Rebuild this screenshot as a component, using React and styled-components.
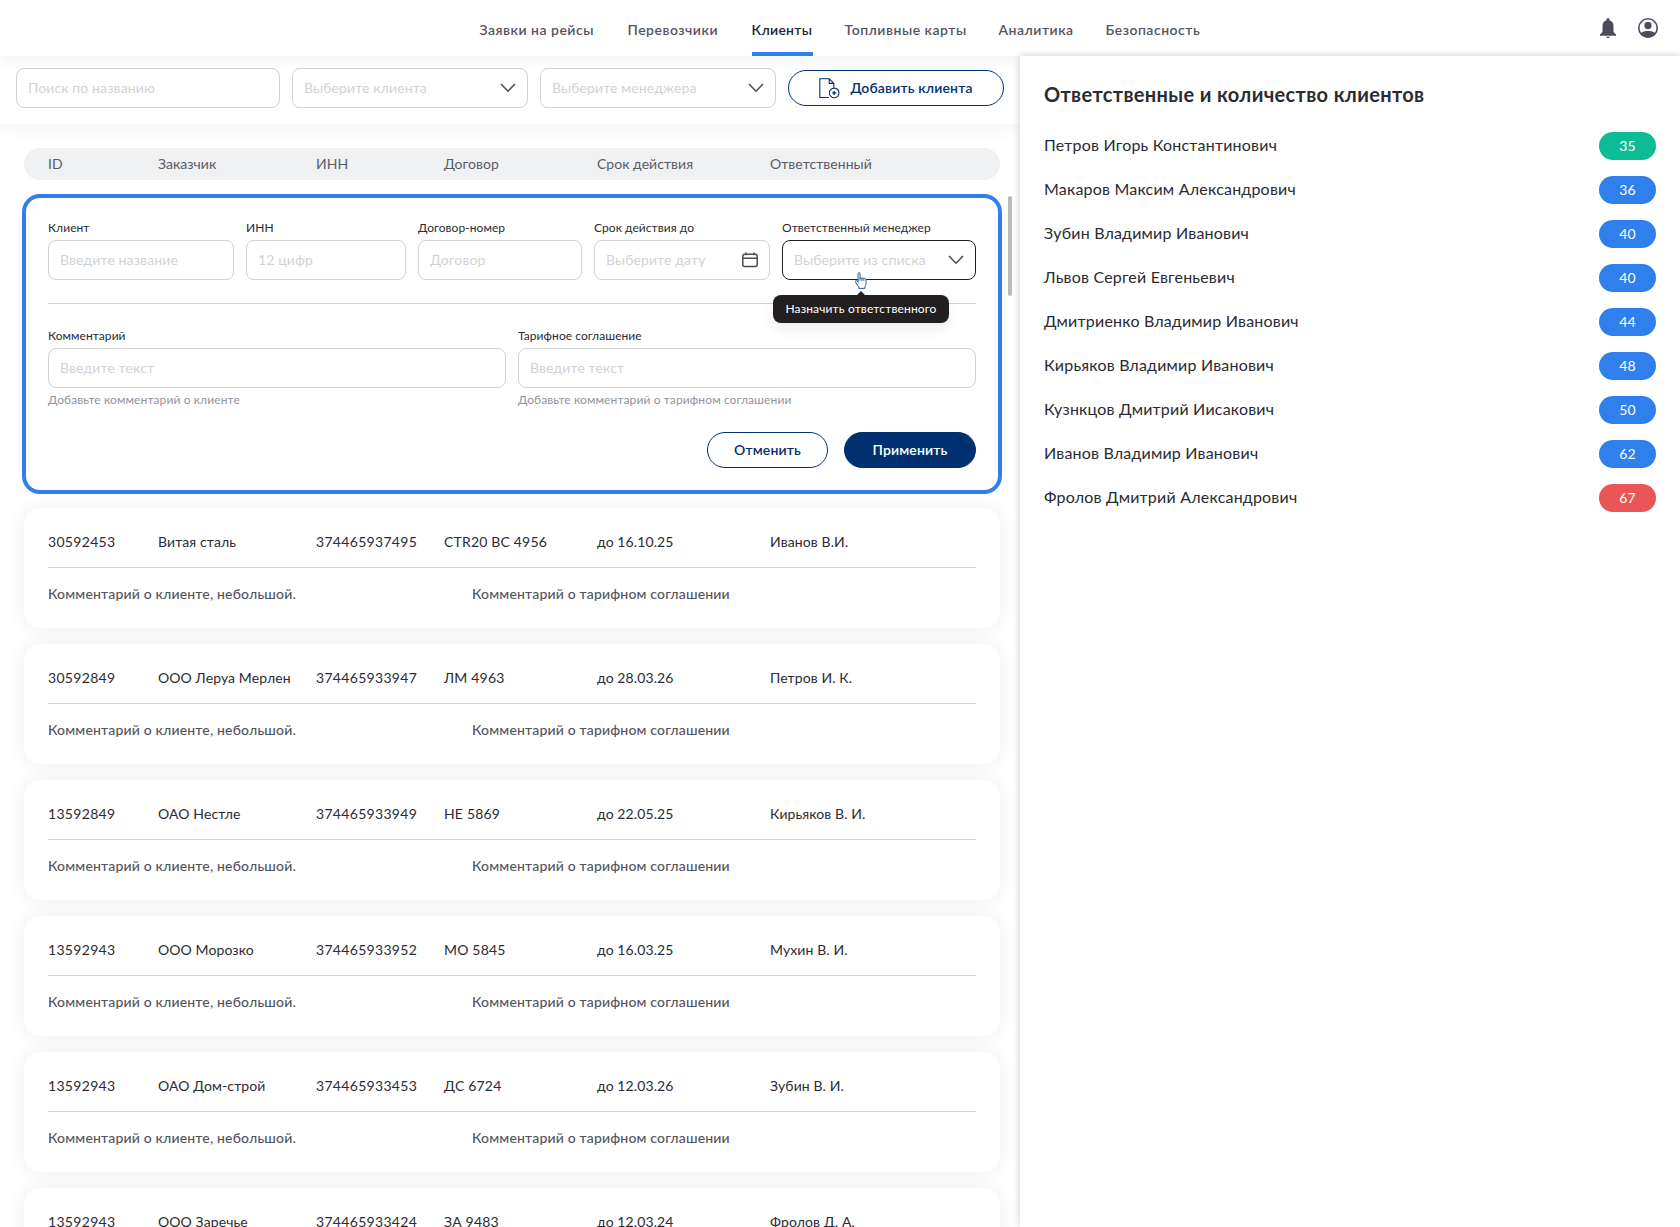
import React from "react";
import styled, { createGlobalStyle } from "styled-components";

const navItems = [
  { label: "Заявки на рейсы", width: 116 },
  { label: "Перевозчики", width: 92 },
  { label: "Клиенты", width: 61, active: true },
  { label: "Топливные карты", width: 122 },
  { label: "Аналитика", width: 75 },
  { label: "Безопасность", width: 96 },
];

const columns = ["ID", "Заказчик", "ИНН", "Договор", "Срок действия", "Ответственный"];

const clients = [
  ["30592453", "Витая сталь", "374465937495", "CTR20 ВС 4956", "до 16.10.25", "Иванов В.И."],
  ["30592849", "ООО Леруа Мерлен", "374465933947", "ЛМ 4963", "до 28.03.26", "Петров И. К."],
  ["13592849", "ОАО Нестле", "374465933949", "НЕ 5869", "до 22.05.25", "Кирьяков В. И."],
  ["13592943", "ООО Морозко", "374465933952", "МО 5845", "до 16.03.25", "Мухин В. И."],
  ["13592943", "ОАО Дом-строй", "374465933453", "ДС 6724", "до 12.03.26", "Зубин В. И."],
  ["13592943", "ООО Заречье", "374465933424", "ЗА 9483", "до 12.03.24", "Фролов Д. А."],
];

const managers = [
  { name: "Петров Игорь Константинович", count: 35, color: "#0dbc94" },
  { name: "Макаров Максим Александрович", count: 36 },
  { name: "Зубин Владимир Иванович", count: 40 },
  { name: "Львов Сергей Евгеньевич", count: 40 },
  { name: "Дмитриенко Владимир Иванович", count: 44 },
  { name: "Кирьяков Владимир Иванович", count: 48 },
  { name: "Кузнкцов Дмитрий Иисакович", count: 50 },
  { name: "Иванов Владимир Иванович", count: 62 },
  { name: "Фролов Дмитрий Александрович", count: 67, color: "#ea5657" },
];

const Chevron = () => (
  <svg width="16" height="10" viewBox="0 0 16 10" fill="none">
    <path d="M1 1 8 8.200 15 1" stroke="#4d4d59" strokeWidth="1.600" />
  </svg>
);

const CalendarIcon = () => (
  <svg width="16" height="16" viewBox="0 0 16 16" fill="none" stroke="#4d4d59" strokeWidth="1.5">
    <rect x="0.8" y="2.3" width="14.4" height="12.2" rx="2" />
    <path d="M1 6.2h14M4 0.4v2.8M12 0.4v2.8" />
  </svg>
);

const AddFileIcon = () => (
  <svg width="21" height="21" viewBox="0 0 21 21" fill="none" stroke="#003070" strokeWidth="1.1">
    <path d="M9.8 19.5H.8V.8h9.4l4.6 4.6v4.3M10.2.8v4.6h4.6" />
    <circle cx="15.2" cy="14.9" r="4.8" />
    <path d="M15.2 12.9v4M13.2 14.9h4" strokeWidth="1.3" />
  </svg>
);

const BellIcon = () => (
  <svg width="16" height="20" viewBox="0 0 16 20" fill="#4d4d59">
    <path d="M8 0a1.500 1.500 0 0 1 1.500 1.500v.8c2.400.7 4 2.800 4 5.500v6.100L16 16.500v1.300H0v-1.300l2.500-2.600V7.800c0-2.700 1.600-4.800 4-5.500v-.8A1.500 1.500 0 0 1 8 0zM6 18.700h4c-.3.8-1 1.300-2 1.300s-1.700-.5-2-1.300z" />
  </svg>
);

const UserIcon = () => (
  <svg width="20" height="20" viewBox="0 0 20 20">
    <circle cx="10" cy="10" r="9.200" fill="none" stroke="#4d4d59" strokeWidth="1.600" />
    <circle cx="10" cy="7.400" r="3.600" fill="#4d4d59" />
    <path d="M2.800 15.700c1.400-2.200 4-3 7.200-3s5.800.8 7.200 3A9.200 9.200 0 0 1 10 19.500a9.200 9.200 0 0 1-7.200-3.800z" fill="#4d4d59" />
  </svg>
);

const HandCursor = () => (
  <svg width="12" height="17" viewBox="0 0 12 17" fill="#fff" stroke="#1d4b84" strokeWidth="0.9">
    <path d="M3.100 10.300V1.700c0-1.500 1.900-1.500 1.900 0v5c0-1.300 1.900-1.300 1.900.1 0-1.200 1.900-1.200 1.900.2 0-1.100 2.200-1 2.200.7v3.900c0 1.500-.8 2.200-1.100 3.100v1.700H3.900v-1.500C2.600 13.700.7 11.300.6 9.400c-.1-1.300 1.300-1.400 1.700-.5z" />
    <path d="M5 6.700v2M6.900 6.800v2M8.800 7v1.800" />
  </svg>
);

function Field({ label, placeholder, hint, icon, focused, width, children }) {
  return (
    <FieldBox $width={width}>
      {label && <Label>{label}</Label>}
      <Input $focused={focused}>
        <span>{placeholder}</span>
        {icon}
      </Input>
      {hint && <Hint>{hint}</Hint>}
      {children}
    </FieldBox>
  );
}

function App() {
  return (
    <Page>
      <GlobalStyle />
      <Header>
        <Nav>
          {navItems.map((item) => (
            <NavItem key={item.label} $active={item.active} $width={item.width}>
              {item.label}
            </NavItem>
          ))}
        </Nav>
        <HeaderIcons>
          <BellIcon />
          <UserIcon />
        </HeaderIcons>
      </Header>
      <Main>
        <Content>
          <Filters>
            <Field placeholder="Поиск по названию" width={264} />
            <Field placeholder="Выберите клиента" width={236} icon={<Chevron />} />
            <Field placeholder="Выберите менеджера" width={236} icon={<Chevron />} />
            <Button $width={216}>
              <AddFileIcon />
              Добавить клиента
            </Button>
          </Filters>
          <ListArea>
            <List>
              <TableHead>
                {columns.map((name) => (
                  <span key={name}>{name}</span>
                ))}
              </TableHead>
              <EditCard>
                <FormRow>
                  <Field label="Клиент" placeholder="Введите название" width={186} />
                  <Field label="ИНН" placeholder="12 цифр" width={160} />
                  <Field label="Договор-номер" placeholder="Договор" width={164} />
                  <Field
                    label="Срок действия до"
                    placeholder="Выберите дату"
                    width={176}
                    icon={<CalendarIcon />}
                  />
                  <Field
                    label="Ответственный менеджер"
                    placeholder="Выберите из списка"
                    width={194}
                    icon={<Chevron />}
                    focused
                  >
                    <Pointer>
                      <HandCursor />
                    </Pointer>
                    <Tooltip>Назначить ответственного</Tooltip>
                  </Field>
                </FormRow>
                <FormDivider />
                <FormRow>
                  <Field
                    label="Комментарий"
                    placeholder="Введите текст"
                    hint="Добавьте комментарий о клиенте"
                    width={458}
                  />
                  <Field
                    label="Тарифное соглашение"
                    placeholder="Введите текст"
                    hint="Добавьте комментарий о тарифном соглашении"
                    width={458}
                  />
                </FormRow>
                <Actions>
                  <Button $width={121}>Отменить</Button>
                  <Button $width={132} $primary>
                    Применить
                  </Button>
                </Actions>
              </EditCard>
              <Cards>
                {clients.map((row, i) => (
                  <Card key={i}>
                    <CardTop>
                      {row.map((cell, j) => (
                        <span key={j}>{cell}</span>
                      ))}
                    </CardTop>
                    <CardBottom>
                      <span>Комментарий о клиенте, небольшой.</span>
                      <span>Комментарий о тарифном соглашении</span>
                    </CardBottom>
                  </Card>
                ))}
              </Cards>
            </List>
            <ScrollThumb />
          </ListArea>
        </Content>
        <Sidebar>
          <h2>Ответственные и количество клиентов</h2>
          {managers.map((m) => (
            <Manager key={m.name}>
              <span>{m.name}</span>
              <Badge $color={m.color}>{m.count}</Badge>
            </Manager>
          ))}
        </Sidebar>
      </Main>
    </Page>
  );
}

const GlobalStyle = createGlobalStyle`
  * {
    box-sizing: border-box;
  }
  body {
    margin: 0;
    overflow: hidden;
    background: #fff;
    color: #2b2b33;
    font-family: "Lato", "Noto Sans", sans-serif;
    font-size: 14px;
    line-height: 20px;
  }
`;

const Page = styled.div`
  display: flex;
  flex-direction: column;
  width: 1680px;
  height: 1227px;
  overflow: hidden;
`;

const Header = styled.header`
  position: relative;
  display: flex;
  justify-content: space-between;
  flex: none;
  height: 56px;
  padding-left: 479.5px;
  padding-right: 22px;
  box-shadow: 0 4px 16px rgba(0, 0, 0, 0.06);
`;

const Nav = styled.nav`
  display: flex;
  gap: 32px;
`;

const NavItem = styled.div`
  width: ${(p) => p.$width}px;
  height: 56px;
  padding-top: 20px;
  white-space: nowrap;
  font-weight: 600;
  letter-spacing: ${(p) => (p.$active ? "0.3px" : "0.5px")};
  color: ${(p) => (p.$active ? "#27272f" : "#555461")};
  border-bottom: 4px solid ${(p) => (p.$active ? "#2f80ed" : "transparent")};
`;

const HeaderIcons = styled.div`
  display: flex;
  gap: 22px;
  padding-top: 18px;
`;

const Main = styled.main`
  display: flex;
  flex: 1;
  min-height: 0;
`;

const Content = styled.section`
  display: flex;
  flex-direction: column;
  width: 1020px;
  overflow: hidden;
`;

const Filters = styled.div`
  display: flex;
  align-items: center;
  gap: 12px;
  flex: none;
  height: 68px;
  padding: 12px 16px 16px;
  box-shadow: 0 4px 16px rgba(0, 0, 0, 0.06);
`;

const FieldBox = styled.div`
  position: relative;
  display: flex;
  flex-direction: column;
  width: ${(p) => p.$width}px;
`;

const Label = styled.label`
  height: 24px;
  line-height: 24px;
  font-size: 12px;
  letter-spacing: 0.06px;
  white-space: nowrap;
`;

const Input = styled.div`
  display: flex;
  align-items: center;
  justify-content: space-between;
  height: 40px;
  padding: 0 11px;
  background: #fff;
  border: 1px solid ${(p) => (p.$focused ? "#1f1d20" : "#d0d1d3")};
  border-radius: 8px;
  color: #d2d2d5;
  letter-spacing: 0.12px;
  white-space: nowrap;
`;

const Hint = styled.div`
  height: 24px;
  line-height: 23px;
  font-size: 12px;
  letter-spacing: 0.11px;
  color: #93939d;
`;

const Button = styled.button`
  display: flex;
  align-items: center;
  justify-content: center;
  gap: 10px;
  width: ${(p) => p.$width}px;
  height: 36px;
  padding: 0;
  border: 1px solid #003070;
  border-radius: 18px;
  background: ${(p) => (p.$primary ? "#003070" : "#fff")};
  color: ${(p) => (p.$primary ? "#fff" : "#003070")};
  font: inherit;
  font-weight: 600;
  letter-spacing: 0.15px;
`;

const ListArea = styled.div`
  display: flex;
  align-items: flex-start;
  gap: 6px;
  padding: 24px 0 0 22px;
`;

const List = styled.div`
  display: flex;
  flex-direction: column;
  align-items: center;
  width: 980px;
`;

const TableHead = styled.div`
  display: grid;
  grid-template-columns: 110px 158px 128px 153px 173px 1fr;
  align-items: center;
  width: 976px;
  height: 32px;
  padding: 0 24px;
  border-radius: 16px;
  background: #eff1f3;
  color: #5c5b67;
  letter-spacing: 0.04px;
`;

const EditCard = styled.div`
  position: relative;
  width: 980px;
  height: 300px;
  margin-top: 14px;
  padding: 18px 22px 0;
  background: #fff;
  border: 4px solid #2f80ed;
  border-radius: 18px;
  z-index: 1;
`;

const FormRow = styled.div`
  display: flex;
  gap: 12px;
`;

const FormDivider = styled.div`
  height: 1px;
  margin: 23px 0 20px;
  background: #d0d1d3;
`;

const Actions = styled.div`
  display: flex;
  justify-content: flex-end;
  gap: 16px;
  margin-top: 20px;
`;

const Pointer = styled.div`
  position: absolute;
  top: 56px;
  left: 73px;
  z-index: 2;
  line-height: 0;
`;

const Tooltip = styled.div`
  position: absolute;
  top: 79px;
  left: -9px;
  width: 176px;
  height: 28px;
  line-height: 28px;
  border-radius: 8px;
  background: #231f20;
  color: #fff;
  font-size: 12px;
  letter-spacing: 0.15px;
  text-align: center;
  white-space: nowrap;
  box-shadow: 0 6px 14px rgba(0, 0, 0, 0.08);

  &::before {
    content: "";
    position: absolute;
    top: -4px;
    left: 84px;
    border: 4px solid transparent;
    border-top: 0;
    border-bottom-color: #231f20;
  }
`;

const Cards = styled.div`
  display: flex;
  flex-direction: column;
  gap: 16px;
  margin-top: 14px;
`;

const Card = styled.div`
  width: 976px;
  height: 120px;
  padding: 0 24px;
  border-radius: 16px;
  background: #fff;
  box-shadow: 0 0 20px rgba(0, 0, 0, 0.08);
`;

const CardTop = styled.div`
  display: grid;
  grid-template-columns: 110px 158px 128px 153px 173px 1fr;
  height: 60px;
  padding-top: 24px;
  border-bottom: 1px solid #d0d1d3;
  letter-spacing: 0.1px;
  white-space: nowrap;

  /* long numbers get a bit more air */
  span:nth-child(1),
  span:nth-child(3) {
    letter-spacing: 0.31px;
  }

  span:nth-child(4) {
    letter-spacing: 0.18px;
  }
`;

const CardBottom = styled.div`
  display: grid;
  grid-template-columns: 424px 1fr;
  padding-top: 16px;
  font-weight: 500;
  letter-spacing: 0.17px;
  color: #555461;
`;

const ScrollThumb = styled.div`
  width: 4px;
  height: 100px;
  margin-top: 48px;
  border-radius: 2px;
  background: #b9b9b9;
`;

const Sidebar = styled.aside`
  position: relative;
  z-index: 1;
  width: 660px;
  padding: 23px 24px;
  background: #fff;
  box-shadow: 0 0 8px rgba(0, 0, 0, 0.2);

  h2 {
    margin: 0 0 23px;
    font-size: 20px;
    line-height: 30px;
    font-weight: 700;
    letter-spacing: 0.35px;
  }
`;

const Manager = styled.div`
  display: flex;
  justify-content: space-between;
  height: 28px;
  line-height: 26px;
  margin-bottom: 16px;
  font-size: 16px;
  letter-spacing: 0.2px;
`;

const Badge = styled.span`
  width: 57px;
  height: 28px;
  line-height: 28px;
  border-radius: 14px;
  background: ${(p) => p.$color || "#2f80ed"};
  color: #fff;
  font-size: 14px;
  text-align: center;
`;

export default App;
